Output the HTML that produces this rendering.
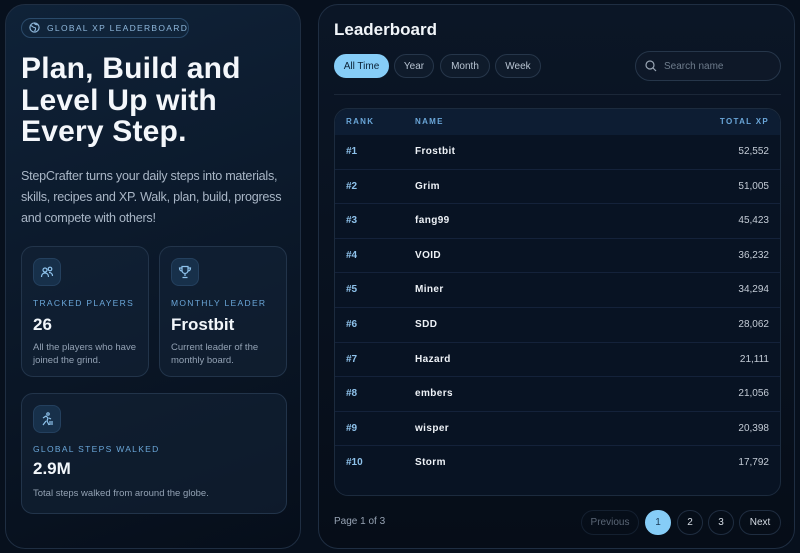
<!DOCTYPE html>
<html><head><meta charset="utf-8"><style>
*{box-sizing:border-box;margin:0;padding:0}
body{width:800px;height:553px;overflow:hidden;background:#07101d;font-family:"Liberation Sans",sans-serif;color:#e8eef6;position:relative}
.card{position:absolute;border:1px solid #1f2e42;border-radius:20px}
.left{left:5px;top:4px;width:296px;height:545px;background:linear-gradient(160deg,#0f2238 0%,#0b1829 50%,#060e1a 100%)}
.right{left:318px;top:4px;width:477px;height:545px;background:linear-gradient(180deg,#0b1626,#060d18)}
.badge{position:absolute;left:15px;top:13px;width:168px;height:20px;border:1px solid #2a4a6a;border-radius:10px;background:#10243a;font-size:8.5px;letter-spacing:1.3px;color:#8fb8dc;padding-left:25px;line-height:18px;white-space:nowrap}
.badge svg{position:absolute;left:7px;top:3px}
h1{position:absolute;left:15px;top:48px;font-size:30px;line-height:31.5px;font-weight:700;color:#f4f7fb;letter-spacing:.2px;white-space:nowrap}
.p{position:absolute;left:15px;top:161px;width:280px;font-size:12.6px;line-height:21px;color:#a9b6c6;letter-spacing:-0.25px}
.stat{position:absolute;border:1px solid #22344a;border-radius:12px;background:rgba(20,36,56,.55)}
.ic{position:absolute;left:11px;top:11px;width:28px;height:28px;border-radius:8px;background:#17304a;border:1px solid #24405e}
.ic svg{position:absolute;left:6px;top:6px}
.lab{position:absolute;left:11px;font-size:8.5px;letter-spacing:1.3px;color:#6aa6d8;white-space:nowrap}
.val{position:absolute;left:11px;font-size:17px;font-weight:700;color:#f2f6fa}
.desc{position:absolute;left:11px;font-size:9.5px;line-height:12.5px;color:#93a2b4}
.lt{position:absolute;left:15px;top:15px;font-size:17px;font-weight:700;color:#f2f6fa}
.tab{position:absolute;top:49px;height:24px;border-radius:12px;border:1px solid #26364a;background:#0f1b2b;font-size:10px;color:#b8c4d2;display:flex;align-items:center;justify-content:center}
.tab.on{background:#86cdf7;color:#0b2236;border-color:#86cdf7}
.search{position:absolute;left:316px;top:46px;width:146px;height:30px;border-radius:15px;border:1px solid #26364a;background:#0e1828;font-size:10px;color:#6e7c8c;display:flex;align-items:center;padding-left:28px}
.search svg{position:absolute;left:9px;top:8px}
.div{position:absolute;left:15px;top:89px;width:447px;height:1px;background:#1b2738}
.table{position:absolute;left:15px;top:103px;width:447px;height:388px;border:1px solid #1c2b3e;border-radius:14px;background:#081323;overflow:hidden}
.th{height:26px;background:#0d1d33;font-size:8px;letter-spacing:1.3px;color:#6aa6d8;font-weight:700;position:relative}
.th span,.row span{position:absolute;top:0}
.row{height:34.6px;border-bottom:1px solid #14223a;position:relative;font-size:10px;line-height:34px}
.r1{left:11px;color:#8fc3ec;font-weight:700}
.r2{left:80px;color:#eef2f7;font-weight:700;letter-spacing:.4px}
.r3{right:11px;color:#c4ccd6}
.th span{line-height:26px}
.pg{position:absolute;left:15px;top:511px;font-size:10px;color:#96a3b3}
.pb{position:absolute;top:505px;height:25px;border-radius:13px;border:1px solid #1f2d40;font-size:10px;color:#d5dce4;display:flex;align-items:center;justify-content:center}
</style></head><body>
<div class="card left">
 <div class="badge"><svg width="11" height="11" viewBox="0 0 12 12"><circle cx="6" cy="6" r="5" fill="none" stroke="#8fb8dc" stroke-width="1.3"/><path d="M2 4c2 0 2 2 4 2s1 3 0 4M6 1c0 2 2 2 4 2" fill="none" stroke="#8fb8dc" stroke-width="1.2"/></svg>GLOBAL XP LEADERBOARD</div>
 <h1>Plan, Build and<br>Level Up with<br>Every Step.</h1>
 <div class="p">StepCrafter turns your daily steps into materials, skills, recipes and XP. Walk, plan, build, progress and compete with others!</div>
 <div class="stat" style="left:15px;top:241px;width:128px;height:131px">
  <div class="ic"><svg width="14" height="14" viewBox="0 0 14 14" fill="none" stroke="#8fc3ec" stroke-width="1.2"><circle cx="5" cy="5" r="2"/><circle cx="10" cy="4" r="1.8"/><path d="M1.5 12c0-2.5 1.5-4 3.5-4s3.5 1.5 3.5 4M9 7.5c2 0 3.5 1.2 3.5 3.5"/></svg></div>
  <div class="lab" style="top:51px">TRACKED PLAYERS</div>
  <div class="val" style="top:68px">26</div>
  <div class="desc" style="top:95px">All the players who have joined the grind.</div>
 </div>
 <div class="stat" style="left:153px;top:241px;width:128px;height:131px">
  <div class="ic"><svg width="14" height="14" viewBox="0 0 14 14" fill="none" stroke="#8fc3ec" stroke-width="1.2"><path d="M4 1.5h6v4a3 3 0 0 1-6 0zM4 3H1.5c0 2 1 3 2.5 3M10 3h2.5c0 2-1 3-2.5 3M7 8.5v2.5M4.5 12.5h5"/></svg></div>
  <div class="lab" style="top:51px">MONTHLY LEADER</div>
  <div class="val" style="top:68px">Frostbit</div>
  <div class="desc" style="top:95px">Current leader of the monthly board.</div>
 </div>
 <div class="stat" style="left:15px;top:388px;width:266px;height:121px">
  <div class="ic"><svg width="14" height="14" viewBox="0 0 14 14" fill="none" stroke="#8fc3ec" stroke-width="1.2"><circle cx="8" cy="2" r="1.2"/><path d="M3 6l3-2 2 2-1 3 2 4M6 9l-3 4M9 6l2 1M10 9v4M12 9v4"/></svg></div>
  <div class="lab" style="top:50px">GLOBAL STEPS WALKED</div>
  <div class="val" style="top:65px">2.9M</div>
  <div class="desc" style="top:94px">Total steps walked from around the globe.</div>
 </div>
</div>
<div class="card right">
 <div class="lt">Leaderboard</div>
 <div class="tab on" style="left:15px;width:55px">All Time</div>
 <div class="tab" style="left:75px;width:40px">Year</div>
 <div class="tab" style="left:121px;width:50px">Month</div>
 <div class="tab" style="left:176px;width:46px">Week</div>
 <div class="search"><svg width="12" height="12" viewBox="0 0 12 12" fill="none" stroke="#9aa6b4" stroke-width="1.2"><circle cx="5" cy="5" r="4"/><path d="M8 8l3 3"/></svg>Search name</div>
 <div class="div"></div>
 <div class="table">
  <div class="th"><span style="left:11px">RANK</span><span style="left:80px">NAME</span><span style="right:11px">TOTAL XP</span></div>
  <div class="row"><span class="r1">#1</span><span class="r2">Frostbit</span><span class="r3">52,552</span></div>
  <div class="row"><span class="r1">#2</span><span class="r2">Grim</span><span class="r3">51,005</span></div>
  <div class="row"><span class="r1">#3</span><span class="r2">fang99</span><span class="r3">45,423</span></div>
  <div class="row"><span class="r1">#4</span><span class="r2">VOID</span><span class="r3">36,232</span></div>
  <div class="row"><span class="r1">#5</span><span class="r2">Miner</span><span class="r3">34,294</span></div>
  <div class="row"><span class="r1">#6</span><span class="r2">SDD</span><span class="r3">28,062</span></div>
  <div class="row"><span class="r1">#7</span><span class="r2">Hazard</span><span class="r3">21,111</span></div>
  <div class="row"><span class="r1">#8</span><span class="r2">embers</span><span class="r3">21,056</span></div>
  <div class="row"><span class="r1">#9</span><span class="r2">wisper</span><span class="r3">20,398</span></div>
  <div class="row" style="border:none"><span class="r1">#10</span><span class="r2">Storm</span><span class="r3">17,792</span></div>
 </div>
 <div class="pg">Page 1 of 3</div>
 <div class="pb" style="left:262px;width:58px;color:#5a6676;border-color:#142030">Previous</div>
 <div class="pb" style="left:326px;width:26px;background:#86cdf7;border-color:#86cdf7;color:#1a3a56">1</div>
 <div class="pb" style="left:358px;width:26px">2</div>
 <div class="pb" style="left:389px;width:26px">3</div>
 <div class="pb" style="left:420px;width:42px">Next</div>
</div>
</body></html>
